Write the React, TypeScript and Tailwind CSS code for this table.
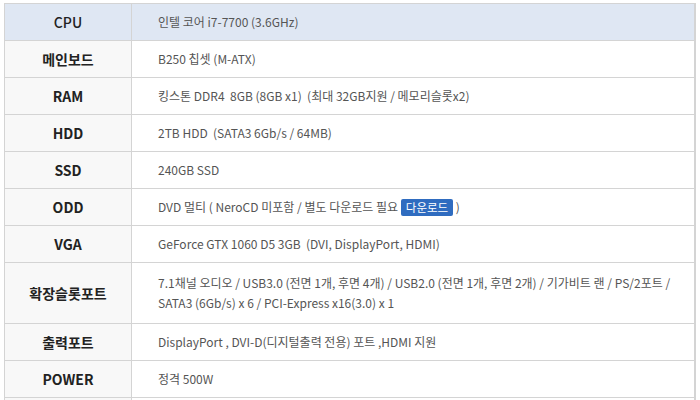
import React from 'react';

type Spec = { label: string; value: React.ReactNode; tall?: boolean };

const specs: Spec[] = [
  { label: '메인보드', value: 'B250 칩셋 (M-ATX)' },
  { label: 'RAM', value: '킹스톤 DDR4  8GB (8GB x1)  (최대 32GB지원 / 메모리슬롯x2)' },
  { label: 'HDD', value: '2TB HDD  (SATA3 6Gb/s / 64MB)' },
  { label: 'SSD', value: '240GB SSD' },
  {
    label: 'ODD',
    value: (
      <>
        DVD 멀티 ( NeroCD 미포함 / 별도 다운로드 필요{' '}
        <span className="inline-block rounded-[2px] bg-[#2f6cc0] px-[5px] text-[11.5px] leading-[17px] text-white">다운로드</span> )
      </>
    ),
  },
  { label: 'VGA', value: 'GeForce GTX 1060 D5 3GB  (DVI, DisplayPort, HDMI)' },
  {
    label: '확장슬롯포트',
    value: (
      <>
        <span className="whitespace-nowrap">
          7.1채널 오디오 / USB3.0 (전면 1개, 후면 4개) / USB2.0 (전면 1개, 후면 2개) / 기가비트 랜 / PS/2포트{' '}
          <span className="text-[#555]">/</span>
        </span>
        <br />
        SATA3 (6Gb/s) x 6 / PCI-Express x16(3.0) x 1
      </>
    ),
    tall: true,
  },
  { label: '출력포트', value: 'DisplayPort , DVI-D(디지털출력 전용) 포트 ,HDMI 지원' },
  { label: 'POWER', value: '정격 500W' },
  { label: '', value: '' },
];

const App = () => {
  return (
    <div className="h-[400px] w-[700px] overflow-hidden bg-white pl-[4px] pt-[3px] font-['Noto_Sans_CJK_KR',sans-serif]">
      <table className="w-[692px] table-fixed border-collapse border-l border-r-2 border-t border-[#d4d4d4] text-[12px]">
        <tbody>
          <tr className="h-[37px] border-b border-[#d4d4d4] bg-[#dfe7f3]">
            <th className="w-[127px] border-r border-[#d4d4d4] text-center text-[14px] font-medium text-[#222]">CPU</th>
            <td className="pl-[26px] text-[#555]">인텔 코어 i7-7700 (3.6GHz)</td>
          </tr>
          {specs.map((s, i) => (
            <tr key={i} className="h-[37px] border-b border-[#d4d4d4]">
              <th className="border-r border-[#d4d4d4] bg-[#f8f8f8] text-center text-[14px] font-semibold text-[#222]">
                {s.label}
              </th>
              <td
                className={
                  s.tall
                    ? 'whitespace-pre-wrap py-[10px] pl-[26px] pr-[2px] leading-[20px] text-[#555]'
                    : 'whitespace-pre-wrap py-0 pl-[26px] pr-[2px] leading-[20px] text-[#555]'
                }
              >
                {s.value}
              </td>
            </tr>
          ))}
        </tbody>
      </table>
    </div>
  );
};

export default App;
